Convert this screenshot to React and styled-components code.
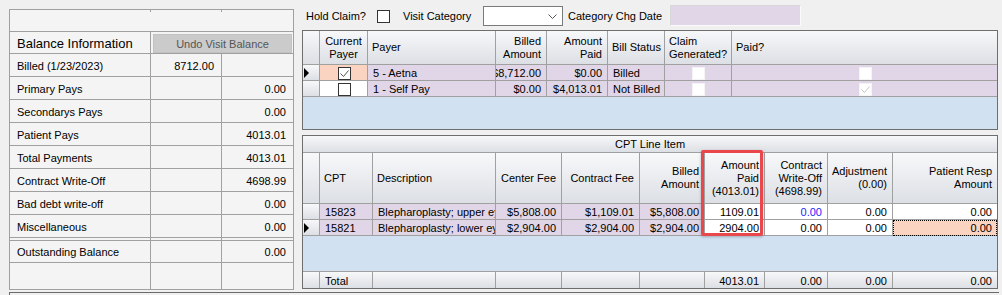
import React from "react"
import styled, { createGlobalStyle } from "styled-components"

const GlobalStyle = createGlobalStyle`
  html, body { margin: 0; padding: 0; background: #f0f0f0; }
  body {
    font-family: "Liberation Sans", Arial, sans-serif;
    font-size: 11px;
    color: #000;
  }
`

const LINE = "#a0a0a0"
const LAVENDER = "#e0d6e7"
const PEACH = "#fbd3c1"
const SKY = "#d1e1f2"
const HEAD_BG = "linear-gradient(#f7f8fa, #dcdfe4)"

const Page = styled.div`
  width: 1002px;
  height: 295px;
  overflow: hidden;
`

const Main = styled.div`
  display: flex;
  align-items: flex-start;
  gap: 8px;
  padding-left: 9px;
  height: 290px;
`

// left: balance information
const BalanceTable = styled.div`
  margin-top: 9px;
  display: grid;
  grid-template-columns: 141px 71px 72px;
  grid-template-rows: 22px 22px repeat(8, 23px) 3px 22px 27px;
  border-top: 1px solid ${LINE};
  border-left: 1px solid ${LINE};
  background: #f4f4f4;
`

const BCell = styled.div`
  box-sizing: border-box;
  grid-column: span ${(p) => p.$span || 1};
  border-right: 1px solid ${LINE};
  border-bottom: 1px solid ${LINE};
  display: flex;
  align-items: center;
  justify-content: ${(p) => (p.$right ? "flex-end" : "flex-start")};
  padding: 1px 7px 0 7px;
  font-size: ${(p) => (p.$big ? 13 : 11)}px;
  white-space: nowrap;
`

const BlankTop = styled(BCell)`
  background:
    linear-gradient(${LINE}, ${LINE}) 140px 0 / 1px 2px no-repeat,
    linear-gradient(${LINE}, ${LINE}) 211px 0 / 1px 2px no-repeat;
`

const ButtonCell = styled(BCell)`
  padding: 2px 1px 0 2px;
  align-items: stretch;
`

const UndoButton = styled.div`
  flex: 1;
  background: #cbcbcb;
  border: 1px solid #c2c2c2;
  color: #555;
  font-size: 11px;
  display: flex;
  align-items: center;
  justify-content: center;
`

// right side
const RightCol = styled.div`
  width: 696px;
  display: flex;
  flex-direction: column;
`

const Toolbar = styled.div`
  box-sizing: border-box;
  height: 30px;
  padding: 2px 0 0 4px;
  display: flex;
  align-items: center;
`

const Label = styled.span`
  width: ${(p) => p.$w}px;
  flex-shrink: 0;
  white-space: nowrap;
`

const ToolCheck = styled.div`
  width: 11px;
  height: 11px;
  margin-right: 13px;
  border: 1px solid #333;
  background: #fff;
`

const Dropdown = styled.div`
  box-sizing: border-box;
  width: 80px;
  height: 20px;
  margin-right: 5px;
  background: #fff;
  border: 1px solid #7a7a7a;
  display: flex;
  align-items: center;
  justify-content: flex-end;
  padding-right: 5px;
`

const DateBox = styled.div`
  box-sizing: border-box;
  margin-top: -2px;
  width: 131px;
  height: 21px;
  background: ${LAVENDER};
  border: 1px solid #fafafa;
  border-top-color: #d8d8d8;
  border-left-color: #d8d8d8;
`

const GridFrame = styled.div`
  position: relative;
  box-sizing: border-box;
  height: ${(p) => p.$h}px;
  margin-top: ${(p) => p.$mt || 0}px;
  border: 1px solid #6e6e6e;
  background: ${SKY};
  display: flex;
  flex-direction: column;
`

const Row = styled.div`
  display: grid;
  grid-template-columns: ${(p) => p.$cols};
  height: ${(p) => p.$h}px;
  flex-shrink: 0;
`

const TotalRow = styled(Row)`
  margin-top: auto;
  border-top: 1px solid ${LINE};
`

const Cell = styled.div`
  box-sizing: border-box;
  border-right: 1px solid ${LINE};
  border-bottom: ${(p) => (p.$noBottom ? "none" : `1px solid ${LINE}`)};
  background: ${(p) => p.$bg || "transparent"};
  color: ${(p) => p.$color || "#000"};
  display: flex;
  align-items: center;
  justify-content: ${(p) =>
    p.$align === "right" ? "flex-end" : p.$align === "center" ? "center" : "flex-start"};
  padding: 1px ${(p) => (p.$align === "right" ? 5 : 4)}px 0 ${(p) => (p.$align === "right" ? 2 : 5)}px;
  white-space: nowrap;
  overflow: hidden;
  outline: ${(p) => (p.$focus ? "1px dotted #000" : "none")};
  outline-offset: -1px;
  &:last-child {
    border-right: none;
  }
`

const HeadCell = styled(Cell)`
  background: ${HEAD_BG};
  text-align: ${(p) => p.$align || "left"};
  line-height: 13px;
  padding-top: 0;
  padding-left: 4px;
`

const RowHead = styled(Cell)`
  background: ${HEAD_BG};
  padding: 0 0 0 1px;
`

const Pointer = styled.div`
  width: 0;
  height: 0;
  border-top: 5px solid transparent;
  border-bottom: 5px solid transparent;
  border-left: 5px solid #000;
`

const Caption = styled.div`
  box-sizing: border-box;
  height: 17px;
  flex-shrink: 0;
  background: ${HEAD_BG};
  border-bottom: 1px solid ${LINE};
  display: flex;
  align-items: center;
  justify-content: center;
`

const Box = styled.div`
  box-sizing: border-box;
  width: 13px;
  height: 13px;
  background: #fff;
  border: ${(p) => (p.$plain ? "1px solid #f4f4f4" : "1px solid #333")};
  display: flex;
  align-items: center;
  justify-content: center;
`

const Highlight = styled.div`
  position: absolute;
  left: 398px;
  top: 14px;
  width: 62px;
  height: 86px;
  box-sizing: border-box;
  border: 3px solid #e9474c;
  border-radius: 2px;
  box-shadow: 0 1px 3px rgba(0, 0, 0, 0.25);
  pointer-events: none;
`

const Rule = styled.div`
  margin: 2px 0 0 9px;
  width: 989px;
  height: 3px;
  border-top: 1px solid #6b6b6b;
  border-left: 1px solid #6b6b6b;
`

function Check({ faint }) {
  return (
    <svg width="11" height="11" viewBox="0 0 11 11">
      <polyline
        points="1.5,5.5 4.5,8.5 9.5,2.5"
        fill="none"
        stroke={faint ? "#c4c4c4" : "#555"}
        strokeWidth="1"
      />
    </svg>
  )
}

function CheckBox({ checked, plain, faint }) {
  return <Box $plain={plain}>{checked && <Check faint={faint} />}</Box>
}

const cols = (arr) => arr.map((c) => `${c}px`).join(" ")
const payerCols = cols([17, 48, 128, 51, 61, 57, 67, 265])
const cptCols = cols([17, 53, 123, 66, 78, 65, 60, 63, 65, 104])

const balanceRows = [
  ["Primary Pays", "0.00"],
  ["Secondarys Pays", "0.00"],
  ["Patient Pays", "4013.01"],
  ["Total Payments", "4013.01"],
  ["Contract Write-Off", "4698.99"],
  ["Bad debt write-off", "0.00"],
  ["Miscellaneous", "0.00"],
]

const payers = [
  { pointer: true, checked: true, payer: "5 - Aetna", billed: "$8,712.00", paid: "$0.00", status: "Billed", paidFlag: false },
  { pointer: false, checked: false, payer: "1 - Self Pay", billed: "$0.00", paid: "$4,013.01", status: "Not Billed", paidFlag: true },
]

const lines = [
  { cpt: "15823", desc: "Blepharoplasty; upper eyelid", center: "$5,808.00", contract: "$1,109.01", billed: "$5,808.00", paid: "1109.01", wo: "0.00", woColor: "#2222ff", adj: "0.00", resp: "0.00" },
  { pointer: true, cpt: "15821", desc: "Blepharoplasty; lower eyelid", center: "$2,904.00", contract: "$2,904.00", billed: "$2,904.00", paid: "2904.00", wo: "0.00", adj: "0.00", resp: "0.00", focus: true },
]

function Balance() {
  return (
    <BalanceTable>
      <BlankTop $span={3} />
      <BCell $big>Balance Information</BCell>
      <ButtonCell $span={2}>
        <UndoButton>Undo Visit Balance</UndoButton>
      </ButtonCell>
      <BCell>Billed (1/23/2023)</BCell>
      <BCell $right>8712.00</BCell>
      <BCell />
      {balanceRows.map(([label, value]) => (
        <React.Fragment key={label}>
          <BCell>{label}</BCell>
          <BCell />
          <BCell $right>{value}</BCell>
        </React.Fragment>
      ))}
      <BCell />
      <BCell />
      <BCell />
      <BCell>Outstanding Balance</BCell>
      <BCell />
      <BCell $right>0.00</BCell>
      <BCell />
      <BCell />
      <BCell />
    </BalanceTable>
  )
}

function PayerGrid() {
  return (
    <GridFrame $h={100}>
      <Row $cols={payerCols} $h={34}>
        <RowHead />
        <HeadCell $align="center">
          <span>Current<br />Payer</span>
        </HeadCell>
        <HeadCell>Payer</HeadCell>
        <HeadCell $align="right">
          <span>Billed<br />Amount</span>
        </HeadCell>
        <HeadCell $align="right">
          <span>Amount<br />Paid</span>
        </HeadCell>
        <HeadCell>Bill Status</HeadCell>
        <HeadCell>
          <span>Claim<br />Generated?</span>
        </HeadCell>
        <HeadCell>Paid?</HeadCell>
      </Row>
      {payers.map((p) => (
        <Row key={p.payer} $cols={payerCols} $h={16}>
          <RowHead>{p.pointer && <Pointer />}</RowHead>
          <Cell $align="center" $bg={p.checked ? PEACH : "#fff"}>
            <CheckBox checked={p.checked} />
          </Cell>
          <Cell $bg={LAVENDER}>{p.payer}</Cell>
          <Cell $bg={LAVENDER} $align="right">{p.billed}</Cell>
          <Cell $bg={LAVENDER} $align="right">{p.paid}</Cell>
          <Cell $bg={LAVENDER}>{p.status}</Cell>
          <Cell $bg={LAVENDER} $align="center">
            <CheckBox plain />
          </Cell>
          <Cell $bg={LAVENDER} $align="center">
            <CheckBox plain checked={p.paidFlag} faint />
          </Cell>
        </Row>
      ))}
    </GridFrame>
  )
}

function CptGrid() {
  return (
    <GridFrame $h={154} $mt={5}>
      <Caption>CPT Line Item</Caption>
      <Row $cols={cptCols} $h={51}>
        <RowHead />
        <HeadCell>CPT</HeadCell>
        <HeadCell>Description</HeadCell>
        <HeadCell $align="right">Center Fee</HeadCell>
        <HeadCell $align="right">Contract Fee</HeadCell>
        <HeadCell $align="right">
          <span>Billed<br />Amount</span>
        </HeadCell>
        <HeadCell $align="right">
          <span>Amount<br />Paid<br />(4013.01)</span>
        </HeadCell>
        <HeadCell $align="right">
          <span>Contract<br />Write-Off<br />(4698.99)</span>
        </HeadCell>
        <HeadCell $align="right">
          <span>Adjustment<br />(0.00)</span>
        </HeadCell>
        <HeadCell $align="right">
          <span>Patient Resp<br />Amount</span>
        </HeadCell>
      </Row>
      {lines.map((l) => (
        <Row key={l.cpt} $cols={cptCols} $h={16}>
          <RowHead>{l.pointer && <Pointer />}</RowHead>
          <Cell $bg={LAVENDER}>{l.cpt}</Cell>
          <Cell $bg={LAVENDER}>{l.desc}</Cell>
          <Cell $bg={LAVENDER} $align="right">{l.center}</Cell>
          <Cell $bg={LAVENDER} $align="right">{l.contract}</Cell>
          <Cell $bg={LAVENDER} $align="right">{l.billed}</Cell>
          <Cell $bg="#fff" $align="right">{l.paid}</Cell>
          <Cell $bg="#fff" $align="right" $color={l.woColor}>{l.wo}</Cell>
          <Cell $bg="#fff" $align="right">{l.adj}</Cell>
          <Cell $bg={l.focus ? PEACH : "#fff"} $align="right" $focus={l.focus}>
            {l.resp}
          </Cell>
        </Row>
      ))}
      <TotalRow $cols={cptCols} $h={16}>
        <RowHead $noBottom />
        <Cell $noBottom $bg={HEAD_BG}>Total</Cell>
        <Cell $noBottom $bg={HEAD_BG} />
        <Cell $noBottom $bg={HEAD_BG} />
        <Cell $noBottom $bg={HEAD_BG} />
        <Cell $noBottom $bg={HEAD_BG} />
        <Cell $noBottom $bg={HEAD_BG} $align="right">4013.01</Cell>
        <Cell $noBottom $bg={HEAD_BG} $align="right">0.00</Cell>
        <Cell $noBottom $bg={HEAD_BG} $align="right">0.00</Cell>
        <Cell $noBottom $bg={HEAD_BG} $align="right">0.00</Cell>
      </TotalRow>
      <Highlight />
    </GridFrame>
  )
}

export default function App() {
  return (
    <Page>
      <GlobalStyle />
      <Main>
        <Balance />
        <RightCol>
          <Toolbar>
            <Label $w={71}>Hold Claim?</Label>
            <ToolCheck />
            <Label $w={80}>Visit Category</Label>
            <Dropdown>
              <svg width="9" height="5" viewBox="0 0 9 5">
                <polyline points="0.5,0.5 4.5,4.5 8.5,0.5" fill="none" stroke="#555" strokeWidth="1" />
              </svg>
            </Dropdown>
            <Label $w={102}>Category Chg Date</Label>
            <DateBox />
          </Toolbar>
          <PayerGrid />
          <CptGrid />
        </RightCol>
      </Main>
      <Rule />
    </Page>
  )
}
